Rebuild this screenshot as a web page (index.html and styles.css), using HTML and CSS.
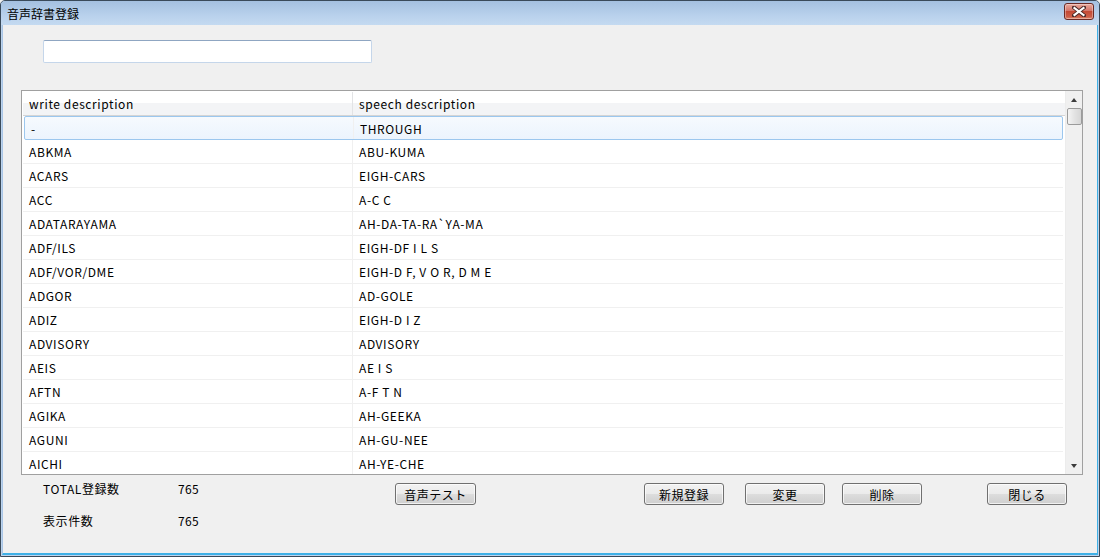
FILE: index.html
```html
<!DOCTYPE html>
<html lang="ja">
<head>
<meta charset="utf-8">
<title>音声辞書登録</title>
<link rel="stylesheet" href="styles.css">
</head>
<body>
<div class="window">
  <div class="titlebar">
    <span class="title">音声辞書登録</span>
    <button class="close" type="button" aria-label="close">
      <svg width="14" height="11" viewBox="0 0 14 11">
        <path d="M2 1.5 L12 9.5 M12 1.5 L2 9.5" stroke="#4a2a28" stroke-width="4" stroke-linecap="square"/>
        <path d="M2.5 2 L11.5 9 M11.5 2 L2.5 9" stroke="#ffffff" stroke-width="2.2" stroke-linecap="square"/>
      </svg>
    </button>
  </div>
  <div class="client">
    <div class="search-row">
      <input class="search" type="text">
    </div>
    <div class="list">
      <div class="grid">
        <div class="row head">
          <div class="cell c1">write description</div>
          <div class="cell c2">speech description</div>
        </div>
        <div class="row selected">
          <div class="cell c1">-</div>
          <div class="cell c2">THROUGH</div>
        </div>
        <div class="row"><div class="cell c1">ABKMA</div><div class="cell c2">ABU-KUMA</div></div>
        <div class="row"><div class="cell c1">ACARS</div><div class="cell c2">EIGH-CARS</div></div>
        <div class="row"><div class="cell c1">ACC</div><div class="cell c2">A-C C</div></div>
        <div class="row"><div class="cell c1">ADATARAYAMA</div><div class="cell c2">AH-DA-TA-RA`YA-MA</div></div>
        <div class="row"><div class="cell c1">ADF/ILS</div><div class="cell c2">EIGH-DF I L S</div></div>
        <div class="row"><div class="cell c1">ADF/VOR/DME</div><div class="cell c2">EIGH-D F, V O R, D M E</div></div>
        <div class="row"><div class="cell c1">ADGOR</div><div class="cell c2">AD-GOLE</div></div>
        <div class="row"><div class="cell c1">ADIZ</div><div class="cell c2">EIGH-D I Z</div></div>
        <div class="row"><div class="cell c1">ADVISORY</div><div class="cell c2">ADVISORY</div></div>
        <div class="row"><div class="cell c1">AEIS</div><div class="cell c2">AE I S</div></div>
        <div class="row"><div class="cell c1">AFTN</div><div class="cell c2">A-F T N</div></div>
        <div class="row"><div class="cell c1">AGIKA</div><div class="cell c2">AH-GEEKA</div></div>
        <div class="row"><div class="cell c1">AGUNI</div><div class="cell c2">AH-GU-NEE</div></div>
        <div class="row"><div class="cell c1">AICHI</div><div class="cell c2">AH-YE-CHE</div></div>
      </div>
      <div class="scrollbar">
        <div class="arrow up"></div>
        <div class="thumb"></div>
        <div class="track"></div>
        <div class="arrow down"></div>
      </div>
    </div>
    <div class="footer">
      <div class="stats">
        <div class="stat"><span class="label">TOTAL登録数</span><span class="value">765</span></div>
        <div class="stat"><span class="label">表示件数</span><span class="value">765</span></div>
      </div>
      <button class="btn test" type="button">音声テスト</button>
      <button class="btn new" type="button">新規登録</button>
      <button class="btn edit" type="button">変更</button>
      <button class="btn del" type="button">削除</button>
      <button class="btn closebtn" type="button">閉じる</button>
    </div>
  </div>
</div>
</body>
</html>
```
FILE: styles.css
```css
* { box-sizing: border-box; }
html, body { margin: 0; padding: 0; }
body {
  width: 1100px;
  height: 557px;
  overflow: hidden;
  background: #f0f0f0;
  font-family: "Noto Sans CJK JP", "Noto Sans", sans-serif;
  font-size: 12px;
  color: #000;
}
.window {
  width: 1100px;
  height: 557px;
  border: 1px solid #3a4a5a;
  border-radius: 5px 5px 0 0;
  display: flex;
  flex-direction: column;
  background: #bcd3ec;
}
.titlebar {
  height: 24px;
  flex: none;
  display: flex;
  align-items: center;
  padding: 0 5px 0 6px;
  background: linear-gradient(#a4c0e0, #b9d1ec 60%, #c4daf1);
  border-radius: 4px 4px 0 0;
}
.title {
  flex: 1;
  font-size: 12px;
  line-height: 14px;
  padding-top: 1px;
}
.close {
  width: 30px;
  height: 17px;
  margin-top: -4px;
  padding: 0;
  border: 1px solid #6b2a25;
  border-radius: 3px;
  background: linear-gradient(#e9a99c, #d4766a 45%, #c44a35 50%, #cc5e48 85%, #e08a70);
  display: flex;
  align-items: center;
  justify-content: center;
  box-shadow: inset 0 0 0 1px rgba(255,255,255,0.35);
}
.close svg { display: block; }
.client {
  flex: 1;
  display: flex;
  flex-direction: column;
  background: #f0f0f0;
  margin: 0 1px 1px 1px;
  border-left: 1px solid #a9c5e6;
  border-right: 1px solid #3fb0e6;
  border-bottom: 2px solid #3fb0e6;
}
.search-row {
  padding: 15px 0 0 40px;
  height: 65px;
  flex: none;
}
.search {
  display: block;
  width: 329px;
  height: 23px;
  margin: 0;
  border: 1px solid #c5d6ea;
  border-top-color: #8fa6c2;
  border-radius: 2px;
  background: #fff;
  outline: none;
}
.list {
  margin-left: 18px;
  width: 1062px;
  height: 385px;
  flex: none;
  border: 1px solid #a0a0a0;
  background: #fff;
  display: flex;
  overflow: hidden;
}
.grid {
  flex: 1;
  padding-left: 1px;
  overflow: hidden;
}
.row {
  display: flex;
  height: 24px;
  border-bottom: 1px solid #f0f0f0;
  margin-right: 2px;
}
.row.head {
  height: 25px;
  margin-right: 0;
  border-bottom: 1px solid #d5d5d5;
  background: linear-gradient(#ffffff 50%, #f3f4f6 50%);
  padding-top: 1px;
}
.row.selected {
  margin: 0 2px 0 1px;
  border: 1px solid #9cc7ee;
  border-radius: 2px;
  background: linear-gradient(#f6fafe, #ecf4fd);
}
.row.selected .c1 { width: 329px; }
.cell {
  display: flex;
  align-items: center;
  padding-left: 6px;
  white-space: nowrap;
  letter-spacing: 0.6px;
}
.c1 {
  width: 330px;
  border-right: 1px solid #f0f0f0;
}
.head .c1 { border-right-color: #e2e3e5; }
.c2 { flex: 1; }
.scrollbar {
  width: 17px;
  flex: none;
  background: #f0f0f0;
  border-left: 1px solid #ececec;
  display: flex;
  flex-direction: column;
  align-items: center;
}
.arrow {
  height: 17px;
  width: 100%;
  display: flex;
  align-items: center;
  justify-content: center;
  flex: none;
}
.arrow::before {
  content: "";
  width: 0;
  height: 0;
  border-left: 3.5px solid transparent;
  border-right: 3.5px solid transparent;
}
.arrow.up::before { border-bottom: 4px solid #3b3b3b; }
.arrow.down::before { border-top: 4px solid #3b3b3b; }
.thumb {
  width: 15px;
  height: 17px;
  flex: none;
  border: 1px solid #9b9b9b;
  border-radius: 2px;
  background: linear-gradient(90deg, #f4f4f4, #e3e3e3 50%, #d6d6d6);
}
.track { flex: 1; }
.footer {
  display: flex;
  align-items: flex-start;
  padding-top: 6px;
}
.stats {
  width: 392px;
  padding-left: 40px;
  display: flex;
  flex-direction: column;
  gap: 17px;
}
.stat {
  display: flex;
  height: 15px;
  align-items: center;
}
.label { width: 135px; letter-spacing: 0.6px; }
.value { letter-spacing: 0.4px; }
.btn {
  height: 22px;
  width: 80px;
  padding: 0;
  margin: 2px 0 0 0;
  font: inherit;
  font-size: 12px;
  color: #000;
  border: 1px solid #707070;
  border-radius: 3px;
  background: linear-gradient(#f2f2f2, #ebebeb 50%, #dddddd 50%, #cfcfcf);
  box-shadow: inset 0 0 0 1px rgba(255,255,255,0.7);
  letter-spacing: 0.5px;
}
.btn.test { width: 81px; }
.btn.new { margin-left: 168px; }
.btn.edit { margin-left: 21px; }
.btn.del { margin-left: 17px; }
.btn.closebtn { margin-left: 65px; }
```
